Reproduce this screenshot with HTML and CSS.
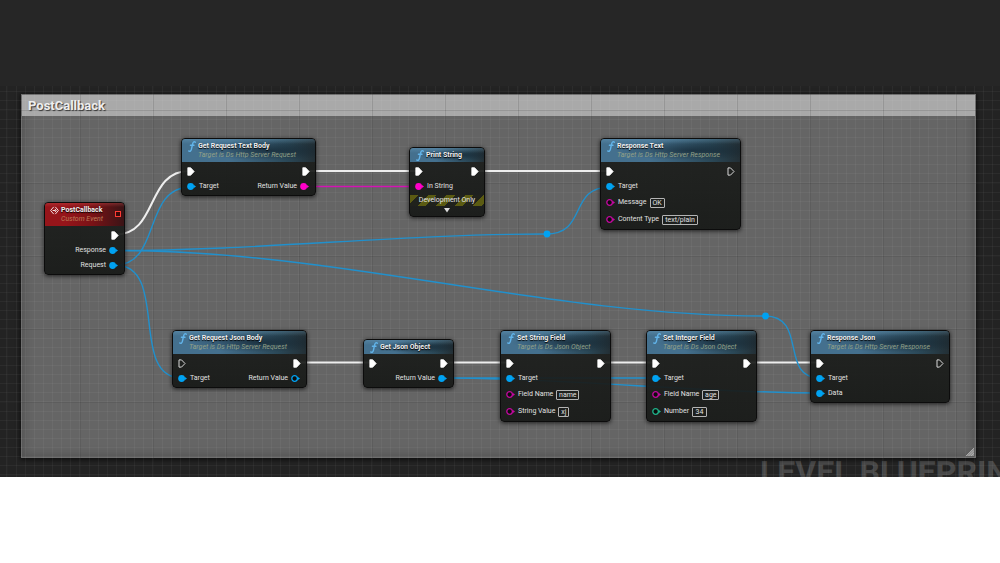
FILE: index.html
```
<!DOCTYPE html>
<html lang="en">
<head>
<meta charset="utf-8">
<title>Level Blueprint</title>
<link rel="stylesheet" href="styles.css">
</head>
<body>
<svg class="symbols" aria-hidden="true">
  <symbol id="fn" viewBox="0 0 8 11"><path d="M7.4 1.2C5.9.1 5 1.2 4.6 3L3.4 8.4C3 10.2 2 10.7.7 10M2.4 4.2h3.6" fill="none" stroke="#62b4ea" stroke-width="1.4" stroke-linecap="round"/></symbol>
  <symbol id="exec" viewBox="0 0 9 9"><path d="M.8.7h2.8L7.2 4.5 3.6 8.3H.8z" fill="#fff" stroke="#fff" stroke-width=".8" stroke-linejoin="round"/></symbol>
  <symbol id="exec-open" viewBox="0 0 9 9"><path d="M1 .9h2.500L7 4.500 3.500 8.100H1z" fill="none" stroke="#d8d8d8" stroke-width="1" stroke-linejoin="round"/></symbol>
  <symbol id="pin" viewBox="0 0 9 9"><circle cx="3.6" cy="4.5" r="3.4" fill="currentColor"/><path d="M6.6 2.7L9 4.5 6.6 6.3z" fill="currentColor"/></symbol>
  <symbol id="pin-open" viewBox="0 0 9 9"><circle cx="3.6" cy="4.5" r="2.8" fill="#0c0d0c" stroke="currentColor" stroke-width="1.3"/><path d="M6.6 2.7L9 4.5 6.6 6.3z" fill="currentColor"/></symbol>
  <symbol id="event" viewBox="0 0 9 9"><path d="M3.7.9L.6 4.5l3.1 3.6M5.3.9l3.1 3.6-3.1 3.6M2.6 4.5h3M4.8 2.9l1.6 1.6-1.6 1.6" fill="none" stroke="#f1dede" stroke-width="1"/></symbol>
</svg>
<header class="topbar"></header>
<main class="canvas">
  <div class="watermark">LEVEL BLUEPRINT</div>
  <section class="comment">
    <h1 class="comment-title">PostCallback</h1>
    <svg class="grip" viewBox="0 0 8 8" aria-hidden="true"><path d="M0 8L8 0V8z" fill="#8f8f8f"/><path d="M0 8L8 0M2.5 8L8 2.5M5 8L8 5" stroke="#b5b5b5" stroke-width=".8"/></svg>
  </section>
  <div class="grid"></div>
  <svg class="wires" viewBox="0 86 1000 391" width="1000" height="391" fill="none" aria-hidden="true">
    <g class="wire-exec">
      <path d="M116 234.500C158 234.500 146 171 189 171M306 171H419M475 171H610M297 362.500H373M444 362.500H510M601 362.500H656M747 362.500H820"/>
    </g>
    <path class="wire-string" d="M306 186.500H419"/>
    <g class="wire-object">
      <path d="M115 265C162 265 142 187 191 187"/>
      <path d="M115 265C170 265 128 378 182 378"/>
      <path d="M115 250.500C260 250.500 400 234 546 234C588 234 568 187 610 187"/>
      <path d="M115 250.500C340 250 545 316 765 316C808 316 779 378 820 378"/>
      <path d="M442 378H656M442 378C570 378 700 393 820 393"/>
      <circle cx="547" cy="234" r="3.400"/><circle cx="765.500" cy="316" r="3.400"/>
    </g>
  </svg>

  <article class="node event n-callback">
    <header class="head"><svg class="event-icon"><use href="#event"/></svg><h2>PostCallback</h2><p>Custom Event</p><i class="delegate"></i></header>
    <div class="row exec"><span class="side out"><svg class="pin"><use href="#exec"/></svg></span></div>
    <div class="row"><span class="side out">Response<svg class="pin object"><use href="#pin"/></svg></span></div>
    <div class="row"><span class="side out">Request<svg class="pin object"><use href="#pin"/></svg></span></div>
  </article>

  <article class="node n-text-body">
    <header class="head"><svg class="fn-icon"><use href="#fn"/></svg><h2>Get Request Text Body</h2><p>Target is Ds Http Server Request</p></header>
    <div class="row exec"><svg class="pin"><use href="#exec"/></svg><span class="side out"><svg class="pin"><use href="#exec"/></svg></span></div>
    <div class="row"><span class="side"><svg class="pin object"><use href="#pin"/></svg>Target</span><span class="side out">Return Value<svg class="pin string"><use href="#pin"/></svg></span></div>
  </article>

  <article class="node n-print">
    <header class="head"><svg class="fn-icon"><use href="#fn"/></svg><h2>Print String</h2></header>
    <div class="row exec"><svg class="pin"><use href="#exec"/></svg><span class="side out"><svg class="pin"><use href="#exec"/></svg></span></div>
    <div class="row"><span class="side"><svg class="pin string"><use href="#pin"/></svg>In String</span></div>
    <div class="dev-only">Development Only</div>
    <button class="expand" aria-label="Show more"><svg viewBox="0 0 6 5"><path d="M0 0h6L3 4.500z" fill="#ddd"/></svg></button>
  </article>

  <article class="node n-response-text">
    <header class="head"><svg class="fn-icon"><use href="#fn"/></svg><h2>Response Text</h2><p>Target is Ds Http Server Response</p></header>
    <div class="row exec"><svg class="pin"><use href="#exec"/></svg><span class="side out"><svg class="pin"><use href="#exec-open"/></svg></span></div>
    <div class="row"><span class="side"><svg class="pin object"><use href="#pin"/></svg>Target</span></div>
    <div class="row value"><label class="side"><svg class="pin string-open"><use href="#pin-open"/></svg>Message<input class="w-s" value="OK"></label></div>
    <div class="row value"><label class="side"><svg class="pin string-open"><use href="#pin-open"/></svg>Content Type<input class="w-l" value="text/plain"></label></div>
  </article>

  <article class="node n-json-body">
    <header class="head"><svg class="fn-icon"><use href="#fn"/></svg><h2>Get Request Json Body</h2><p>Target is Ds Http Server Request</p></header>
    <div class="row exec"><svg class="pin"><use href="#exec-open"/></svg><span class="side out"><svg class="pin"><use href="#exec"/></svg></span></div>
    <div class="row"><span class="side"><svg class="pin object"><use href="#pin"/></svg>Target</span><span class="side out">Return Value<svg class="pin object"><use href="#pin-open"/></svg></span></div>
  </article>

  <article class="node n-json-object">
    <header class="head"><svg class="fn-icon"><use href="#fn"/></svg><h2>Get Json Object</h2></header>
    <div class="row exec"><svg class="pin"><use href="#exec"/></svg><span class="side out"><svg class="pin"><use href="#exec"/></svg></span></div>
    <div class="row"><span class="side out">Return Value<svg class="pin object"><use href="#pin"/></svg></span></div>
  </article>

  <article class="node n-set-string">
    <header class="head"><svg class="fn-icon"><use href="#fn"/></svg><h2>Set String Field</h2><p>Target is Ds Json Object</p></header>
    <div class="row exec"><svg class="pin"><use href="#exec"/></svg><span class="side out"><svg class="pin"><use href="#exec"/></svg></span></div>
    <div class="row"><span class="side"><svg class="pin object"><use href="#pin"/></svg>Target</span></div>
    <div class="row value"><label class="side"><svg class="pin string-open"><use href="#pin-open"/></svg>Field Name<input class="w-m" value="name"></label></div>
    <div class="row value"><label class="side"><svg class="pin string-open"><use href="#pin-open"/></svg>String Value<input class="w-xs" value="xj"></label></div>
  </article>

  <article class="node n-set-integer">
    <header class="head"><svg class="fn-icon"><use href="#fn"/></svg><h2>Set Integer Field</h2><p>Target is Ds Json Object</p></header>
    <div class="row exec"><svg class="pin"><use href="#exec"/></svg><span class="side out"><svg class="pin"><use href="#exec"/></svg></span></div>
    <div class="row"><span class="side"><svg class="pin object"><use href="#pin"/></svg>Target</span></div>
    <div class="row value"><label class="side"><svg class="pin string-open"><use href="#pin-open"/></svg>Field Name<input class="w-sm" value="age"></label></div>
    <div class="row value"><label class="side"><svg class="pin int"><use href="#pin-open"/></svg>Number<input class="w-s" value="34"></label></div>
  </article>

  <article class="node n-response-json">
    <header class="head"><svg class="fn-icon"><use href="#fn"/></svg><h2>Response Json</h2><p>Target is Ds Http Server Response</p></header>
    <div class="row exec"><svg class="pin"><use href="#exec"/></svg><span class="side out"><svg class="pin"><use href="#exec-open"/></svg></span></div>
    <div class="row"><span class="side"><svg class="pin object"><use href="#pin"/></svg>Target</span></div>
    <div class="row"><span class="side"><svg class="pin object"><use href="#pin"/></svg>Data</span></div>
  </article>
</main>
</body>
</html>
```
FILE: styles.css
```
* { box-sizing: border-box; }
body { margin: 0; background: #fff; font-family: Roboto, "Liberation Sans", sans-serif; }
h1, h2, p { margin: 0; }
.symbols { display: none; }
.topbar { height: 86px; background: #262626; }
.canvas { position: relative; height: 391px; overflow: hidden; background: #232323; }

/* graph paper: 8 minor cells to a major one */
.grid {
  position: absolute; inset: 0;
  background-image:
    linear-gradient(to right, rgba(0,0,0,.13) 1px, transparent 1px),
    linear-gradient(to bottom, rgba(0,0,0,.13) 1px, transparent 1px),
    repeating-linear-gradient(to right, rgba(255,255,255,.04) 0 1px, transparent 1px 9px),
    repeating-linear-gradient(to bottom, rgba(255,255,255,.04) 0 1px, transparent 1px 9px);
  background-size: 73px 73px;
  background-position: 7px 24px;
}
.comment {
  position: absolute; left: 21px; right: 24px; top: 8px; bottom: 19px;
  background: #656565; border: 1px solid #6e6e6e;
  box-shadow: 0 1px 4px 1px rgba(0,0,0,.6), inset 0 0 12px rgba(0,0,0,.25);
}
.comment-title {
  height: 21px; padding-left: 6px; background: #a9a9a9;
  font-size: 13px; line-height: 22px; font-weight: 700; color: #eee;
  text-shadow: 1px 1px 1px #333;
}
.grip { position: absolute; right: 1px; bottom: 1px; width: 8px; height: 8px; }
.watermark {
  position: absolute; left: 760px; top: 368px;
  font-size: 32px; line-height: 36px; font-weight: 700; color: #484848; white-space: nowrap;
}
.wires { position: absolute; left: 0; top: 0; }
.wire-exec { stroke: #eee; stroke-width: 2; }
.wire-string { stroke: #d413b4; stroke-width: 1.5; }
.wire-object { stroke: #2190cc; stroke-width: 1.4; }
.wire-object circle { fill: #00a2f2; stroke: none; }

.node {
  position: absolute; border: 1px solid #0c0c0c; border-radius: 4px;
  background: linear-gradient(rgba(29,31,29,.93), rgba(23,25,23,.93));
  box-shadow: 0 1px 4px rgba(0,0,0,.7);
  color: #e0e0e0; font-size: 7px; line-height: 9px; white-space: nowrap;
  padding-bottom: 1px;
}
.head {
  position: relative; padding: 3px 4px 2px 16px; margin-bottom: 1px;
  border-radius: 3px 3px 0 0;
  background:
    linear-gradient(rgba(130,185,220,.25), transparent 5px),
    radial-gradient(ellipse at 65% 50%, rgba(14,30,42,.6), transparent 60%),
    linear-gradient(to right, #44708e 35%, #2a4756 80%, #232f35);
}
.event .head {
  background:
    linear-gradient(rgba(230,90,90,.3), transparent 4px),
    linear-gradient(to right, #96151a 25%, #7a1216 60%, #3a1416);
}
.head h2 { font-size: 7px; line-height: 9px; font-weight: 700; color: #f0f0f0; text-shadow: 0 1px 1px #000; }
.head p { font-size: 7px; line-height: 9px; font-style: italic; color: #92a087; }
.event .head p { color: #bd7c58; }
.fn-icon { position: absolute; left: 6px; top: 2px; width: 8px; height: 11px; }
.event-icon { position: absolute; left: 5px; top: 3px; width: 9px; height: 9px; }
.delegate { position: absolute; right: 3px; top: 8px; width: 6px; height: 6px; border: 1px solid #ff3b34; background: #3b0808; }
.row { display: flex; align-items: center; justify-content: space-between; height: 15px; padding: 0 6px 0 5px; }
.row.exec { height: 16px; padding-right: 4px; }
.row.value { height: 17px; }
.side { display: flex; align-items: center; gap: 3px; }
.out { margin-left: auto; }
.pin { display: block; flex: none; width: 9px; height: 9px; }
.object { color: #00a2f2; }
.string { color: #ff00c8; }
.string-open { color: #c3089f; }
.int { color: #1fb28a; }
input {
  height: 10px; padding: 0 1px; margin: 0; border: 1px solid #b4b4b4; border-radius: 1px;
  background: transparent; color: inherit; font: inherit; line-height: 8px; text-align: center;
}
.w-xs { width: 11px; }
.w-s { width: 15px; }
.w-sm { width: 17px; }
.w-m { width: 23px; }
.w-l { width: 36px; }
.dev-only {
  height: 11px; margin-top: 1px; line-height: 11px; text-align: center; color: #e6e6e6;
  background: repeating-linear-gradient(135deg, #5b5b12 0 6px, #20221c 6px 13px);
}
.expand { display: flex; justify-content: center; width: 100%; height: 9px; padding: 2px 0 0; border: 0; background: none; }
.expand svg { width: 6px; height: 5px; }

.n-callback { left: 44px; top: 116px; width: 81px; }
.n-text-body { left: 181px; top: 52px; width: 135px; }
.n-print { left: 409px; top: 61px; width: 76px; }
.n-response-text { left: 600px; top: 52px; width: 141px; }
.n-json-body { left: 172px; top: 244px; width: 135px; }
.n-json-object { left: 363px; top: 253px; width: 91px; }
.n-set-string { left: 500px; top: 244px; width: 111px; }
.n-set-integer { left: 646px; top: 244px; width: 111px; }
.n-response-json { left: 810px; top: 244px; width: 140px; }
```
